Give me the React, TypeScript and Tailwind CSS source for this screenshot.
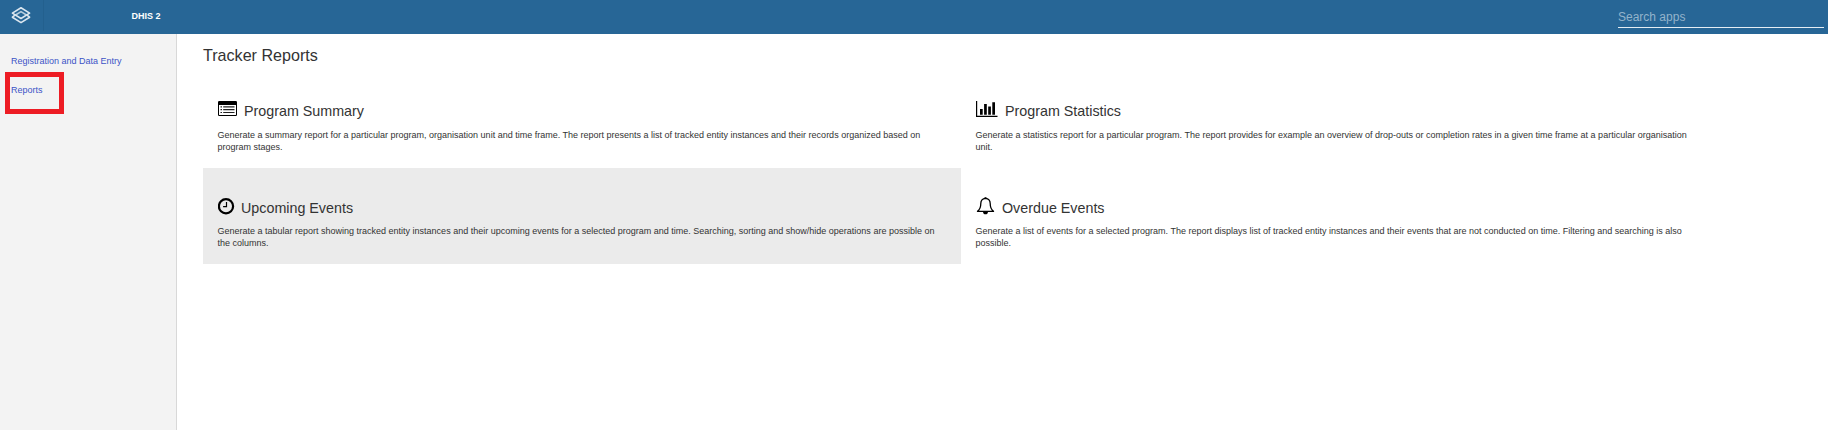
import type { ReactNode } from "react";

const ListAltIcon = () => (
  <svg width="20" height="20" viewBox="0 0 20 20" className="shrink-0">
    <path
      fillRule="evenodd"
      d="M1.200 3h16.600q1.200 0 1.200 1.200v12.600q0 1.200-1.200 1.200H1.200q-1.200 0-1.200-1.200V4.200q0-1.200 1.200-1.200zM1 7v9.500q0 .5.5.5h16q.5 0 .5-.5V7z"
    />
    <path
      fill="#222"
      d="M2.500 8.200H4v1.200H2.500zM2.500 11H4v1.200H2.500zM2.500 13.900H4v1.200H2.500zM5.200 8.200h11.300v1.200H5.200zM5.200 11h11.300v1.200H5.200zM5.200 13.900h11.300v1.200H5.200z"
    />
  </svg>
);

const BarChartIcon = () => (
  <svg width="23" height="20" viewBox="0 0 23 20" className="shrink-0">
    <path d="M0 3h1.200v14.700h20.300V19H0zM4 11h2.700v5.800H4zM8.100 6h2.700v10.800H8.100zM12.200 8.500h2.700v8.300h-2.700zM16.300 4.200H19v12.600h-2.700z" />
  </svg>
);

const ClockIcon = () => (
  <svg width="17" height="20" viewBox="0 0 17 20" className="shrink-0">
    <circle cx="8" cy="11.300" r="7.100" fill="none" stroke="#000" strokeWidth="2.200" />
    <path d="M7.900 7h1.200v5.300H5.100v-1.200h2.800z" />
  </svg>
);

const BellIcon = () => (
  <svg width="20" height="20" viewBox="0 0 20 20" className="shrink-0">
    <path
      d="M9.500 3.300C6.500 3.500 4.800 5.600 4.800 8.600c0 3.700-1.200 6.300-3.300 7.800h16c-2.100-1.500-3.300-4.100-3.300-7.800 0-3-1.700-5.100-4.700-5.300z"
      fill="none"
      stroke="#000"
      strokeWidth="1.300"
      strokeLinejoin="round"
    />
    <path d="M8.500 2.200h2v1.500h-2zM7 16.700h5c0 1.600-1 2.600-2.500 2.600S7 18.300 7 16.700z" />
  </svg>
);

const LogoIcon = () => (
  <svg width="20" height="18" viewBox="0 0 20 18" fill="none" stroke="#dbe6ef" strokeWidth="1.600" strokeLinejoin="round">
    <path d="M10 1.700l8.600 5.400-8.600 5.400-8.600-5.400z" />
    <path d="M4 9.200l-2.600 2 8.600 5.400 8.600-5.400-2.600-2" />
    <path d="M4.200 9.200l5.800-3.600 5.800 3.600" opacity=".8" />
  </svg>
);

type ReportProps = { icon: ReactNode; title: string; text: string; active?: boolean; low?: boolean };

const Report = ({ icon, title, text, active, low }: ReportProps) => (
  <a className={`block h-24 pl-[14.500px] ${low ? "pt-[27px]" : "pt-[26px]"} ${active ? "bg-[#ebebeb]" : ""}`}>
    <div className={`flex items-start gap-[6.500px] ${low ? "h-6" : "h-[25px]"}`}>
      {icon}
      <h2 className="pt-[5px] text-[14.300px] leading-4 text-[#333]">{title}</h2>
    </div>
    <p className="w-[722px] pt-[6px] text-[9px] leading-3 text-[#333]">{text}</p>
  </a>
);

export default function App() {
  return (
    <div className="flex h-[430px] w-[1828px] flex-col overflow-hidden bg-white font-['Liberation_Sans',Arial,sans-serif]">
      <header className="flex h-[34px] shrink-0 items-start bg-[#276696] pr-1">
        <div className="flex h-[31px] w-11 justify-start border-r border-[#23608e] pl-[11px] pt-[6px]">
          <LogoIcon />
        </div>
        <span className="ml-[87.500px] mt-[10px] text-[9px] font-bold leading-3 text-white">DHIS 2</span>
        <div className="ml-auto h-7 w-[206px] border-b border-[#e4edf3] pt-[9px] text-[12px] leading-4 text-[#93b3cb]">
          Search apps
        </div>
      </header>
      <div className="flex flex-1">
        <nav className="relative w-[177px] shrink-0 border-r border-[#d8d8d8] bg-[#f3f3f3] pl-[11px] pt-[21px] text-[9px] leading-3 text-[#3c53c7]">
          <a className="block">Registration and Data Entry</a>
          <a className="mt-[17px] block">Reports</a>
          <div className="absolute left-[5px] top-[38px] h-[42px] w-[59px] border-[5px] border-[#ed1c24]" />
        </nav>
        <main className="pl-[26px]">
          <h1 className="h-[38px] pt-[11px] text-[16.100px] leading-5 text-[#333]">Tracker Reports</h1>
          <div className="grid grid-cols-[758px_758px]">
            <Report
              icon={<ListAltIcon />}
              title="Program Summary"
              text="Generate a summary report for a particular program, organisation unit and time frame. The report presents a list of tracked entity instances and their records organized based on program stages."
            />
            <Report
              icon={<BarChartIcon />}
              title="Program Statistics"
              text="Generate a statistics report for a particular program. The report provides for example an overview of drop-outs or completion rates in a given time frame at a particular organisation unit."
            />
            <Report
              active
              low
              icon={<ClockIcon />}
              title="Upcoming Events"
              text="Generate a tabular report showing tracked entity instances and their upcoming events for a selected program and time. Searching, sorting and show/hide operations are possible on the columns."
            />
            <Report
              low
              icon={<BellIcon />}
              title="Overdue Events"
              text="Generate a list of events for a selected program. The report displays list of tracked entity instances and their events that are not conducted on time. Filtering and searching is also possible."
            />
          </div>
        </main>
      </div>
    </div>
  );
}
